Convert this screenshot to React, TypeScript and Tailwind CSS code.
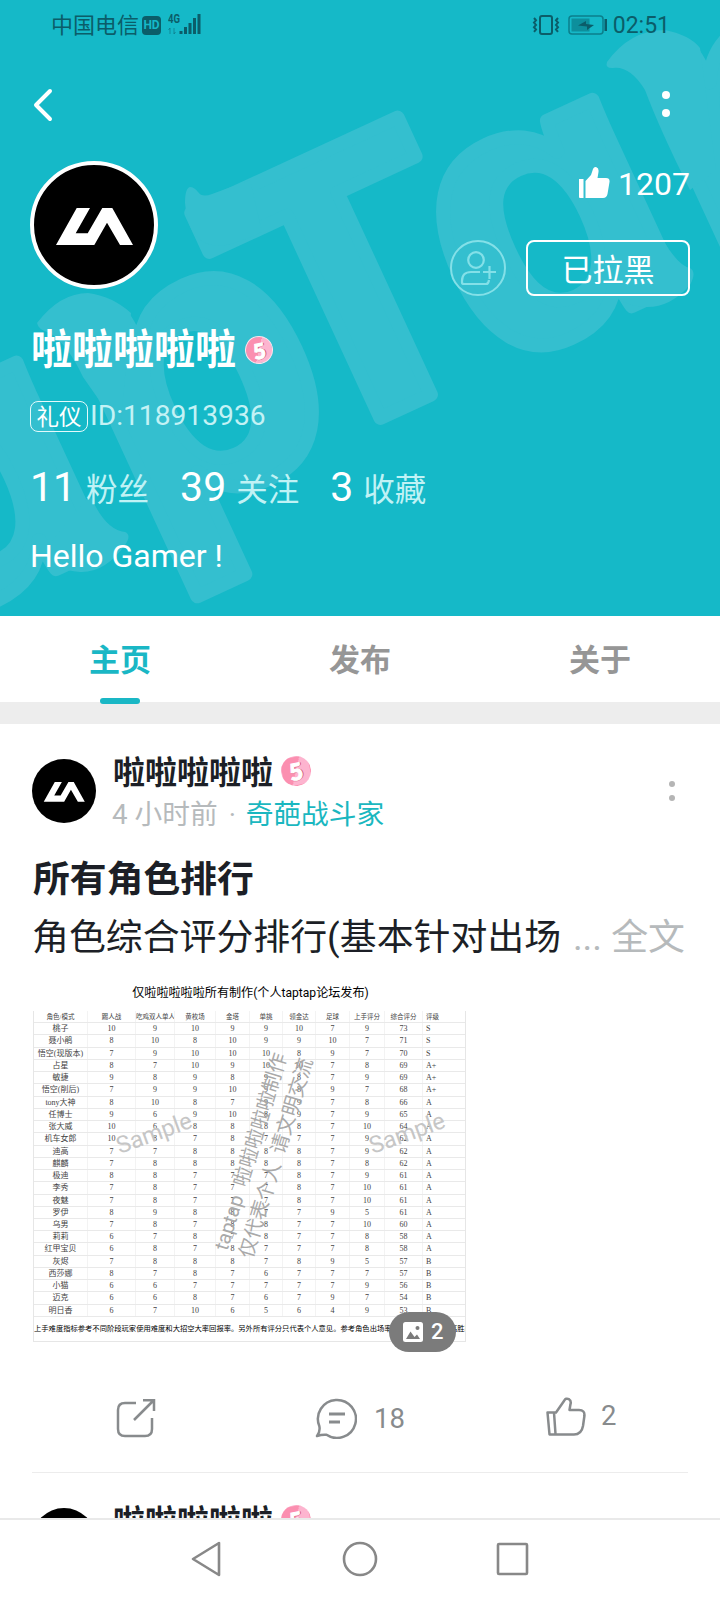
import { clsx } from 'clsx';
import type { ReactNode } from 'react';

const columns = ['角色/模式', '踢人战', '吃鸡双人单人', '黄枚场', '金塔', '单挑', '领金达', '足球', '上手评分', '综合评分', '评级'];

const ranking = [
  ['桃子', 10, 9, 10, 9, 9, 10, 7, 9, 73, 'S'],
  ['聂小鹃', 8, 10, 8, 10, 9, 9, 10, 7, 71, 'S'],
  ['悟空(现版本)', 7, 9, 10, 10, 10, 8, 9, 7, 70, 'S'],
  ['占星', 8, 7, 10, 9, 10, 10, 7, 8, 69, 'A+'],
  ['敏捷', 9, 8, 9, 8, 9, 8, 7, 9, 69, 'A+'],
  ['悟空(削后)', 7, 9, 9, 10, 9, 8, 9, 7, 68, 'A+'],
  ['tony大神', 8, 10, 8, 7, 9, 9, 7, 8, 66, 'A'],
  ['任博士', 9, 6, 9, 10, 8, 9, 7, 9, 65, 'A'],
  ['张大威', 10, 6, 8, 8, 8, 8, 7, 10, 64, 'A'],
  ['机车女郎', 10, 8, 7, 8, 7, 7, 7, 9, 62, 'A'],
  ['迪高', 7, 7, 8, 8, 8, 8, 7, 9, 62, 'A'],
  ['麒麟', 7, 8, 8, 8, 8, 8, 7, 8, 62, 'A'],
  ['极迪', 8, 8, 7, 7, 7, 8, 7, 9, 61, 'A'],
  ['李秀', 7, 8, 7, 7, 7, 8, 7, 10, 61, 'A'],
  ['夜魅', 7, 8, 7, 7, 7, 8, 7, 10, 61, 'A'],
  ['罗伊', 8, 9, 8, 8, 7, 7, 9, 5, 61, 'A'],
  ['乌男', 7, 8, 7, 8, 8, 7, 7, 10, 60, 'A'],
  ['莉莉', 6, 7, 8, 7, 8, 7, 7, 8, 58, 'A'],
  ['红甲宝贝', 6, 8, 7, 8, 7, 7, 7, 8, 58, 'A'],
  ['灰烬', 7, 8, 8, 8, 7, 8, 9, 5, 57, 'B'],
  ['西莎娜', 8, 7, 8, 7, 6, 7, 7, 7, 57, 'B'],
  ['小猫', 6, 6, 7, 7, 7, 7, 7, 9, 56, 'B'],
  ['迈克', 6, 6, 8, 7, 6, 7, 9, 7, 54, 'B'],
  ['明日香', 6, 7, 10, 6, 5, 6, 4, 9, 53, 'B'],
];

function Avatar({ className }: { className: string }) {
  return (
    <div className={clsx('shrink-0 overflow-hidden rounded-full bg-black', className)}>
      <svg viewBox="0 0 120 120" className="h-full w-full">
        <path
          fill="#fff"
          d="M22 80 42.700 43H56L41.700 68.300h12L68.300 43h10L99 80H86L73 57.700 60.300 80Z"
        />
      </svg>
    </div>
  );
}

function LevelBadge({ className }: { className: string }) {
  return (
    <div
      className={clsx(
        'flex shrink-0 -rotate-12 items-center justify-center rounded-full border bg-[linear-gradient(115deg,#fb8fb0_50%,#fdb4cf_50%)] leading-none font-black text-white [-webkit-text-stroke:1px_#fff] [font-family:Lato,sans-serif] [text-shadow:1.500px_0_0_#d9587a,0_1px_0_#e0708f]',
        className,
      )}
    >
      5
    </div>
  );
}

function Dots({ className }: { className: string }) {
  return (
    <div className={clsx('flex flex-col', className)}>
      <span className="aspect-square w-full rounded-full bg-current" />
      <span className="aspect-square w-full rounded-full bg-current" />
    </div>
  );
}

function StatusBar() {
  return (
    <div className="flex h-[50px] items-center pr-[50px] pl-[51px] text-[#0b5d69]">
      <span className="mt-[2px] text-[22px] leading-none">中国电信</span>
      <span className="ml-[3px] flex h-[19px] w-[19px] items-center justify-center rounded-[4px] bg-[#0b5d69] text-[12px] leading-none font-bold text-[#15b9c8]">
        HD
      </span>
      <svg viewBox="0 0 34 22" className="mb-[2px] ml-[7px] h-[22px] w-[34px]" fill="currentColor">
        <text x="0" y="10" fontSize="12" fontWeight="700" textLength="12" lengthAdjust="spacingAndGlyphs">
          4G
        </text>
        <path d="M2 21v-6l-1.500 2M6 15v6l1.500-2" fill="none" stroke="currentColor" opacity=".5" />
        <rect x="11.500" y="18" width="3" height="3" />
        <rect x="16" y="14" width="3" height="7" />
        <rect x="20.500" y="10" width="3" height="11" />
        <rect x="25" y="5" width="3" height="16" />
        <rect x="29.500" y="1" width="3" height="20" />
      </svg>
      <svg viewBox="0 0 28 22" className="ml-auto h-[22px] w-[28px]" fill="none" stroke="currentColor" strokeWidth="2">
        <rect x="8" y="2" width="12" height="18" rx="2" />
        <path d="M2 4l2 2.300-2 2.300 2 2.300-2 2.300 2 2.300-2 2.300M26 4l-2 2.300 2 2.300-2 2.300 2 2.300-2 2.300 2 2.300" />
      </svg>
      <svg viewBox="0 0 40 20" className="ml-[8px] h-[20px] w-[40px]" fill="none">
        <rect x="1" y="1" width="34" height="18" rx="3" stroke="#0b7f8c" strokeWidth="1.500" />
        <rect x="3.500" y="3.500" width="18" height="13" fill="#0d8f9c" />
        <path d="M10 10.500 18 6v3l8 1-7 5v-3.500Z" fill="currentColor" />
        <rect x="36.500" y="4" width="2.500" height="12" fill="currentColor" />
      </svg>
      <span className="ml-[5px] text-[23px] leading-none">02:51</span>
    </div>
  );
}

function Wordmark() {
  return (
    <svg
      viewBox="0 0 720 616"
      className="absolute inset-0 h-full w-full"
      fill="#34bfcf"
      stroke="#34bfcf"
      strokeWidth="14"
      strokeLinejoin="round"
      fontFamily="Liberation Sans"
      fontWeight="700"
      fontSize="386"
      aria-hidden="true"
    >
      <g transform="rotate(-24.800)">
        <text x="-347" y="540">ɑ</text>
        <text x="-98" y="544">p</text>
        <text x="80" y="539">T</text>
        <text x="286" y="543">ɑ</text>
        <text x="530" y="543">p</text>
      </g>
      {/* brush flares at the ends of the strokes */}
      <g stroke="none">
        <path d="M190 187Q185 188 185 203Q188 246 220 246Q236 244 262 232L250 180 212 194Q202 198 198 192Q194 187 190 187Z" />
        <path d="M37 323Q60 293 88 293Q112 296 131 313L120 430 83 377Q68 345 50 333Q38 330 37 323Z" />
        <path d="M607 62Q630 30 665 30Q690 35 700 48L716 170 690 190Q660 130 645 90Q630 65 612 68Q605 68 607 62Z" />
        <path d="M655 225Q675 265 690 268Q697 272 690 285Q670 308 645 307Q620 305 608 290Z" />
        <path d="M90 495Q105 530 125 532Q132 535 125 545Q105 573 80 572Q55 570 40 555Z" />
      </g>
    </svg>
  );
}

function Stat({ value, label }: { value: number; label: string }) {
  return (
    <div className="flex items-baseline gap-[10px]">
      <span className="text-[41px] leading-none">{value}</span>
      <span className="text-[31.500px] leading-none text-[#c0f2f5]">{label}</span>
    </div>
  );
}

function Profile() {
  return (
    <header className="relative h-[616px] overflow-hidden bg-[#15b9c8] text-white">
      <Wordmark />
      <div className="relative">
        <StatusBar />
        <div className="flex h-[111px] items-start justify-between pt-[38px] pr-[50px] pl-[33px]">
          <svg viewBox="0 0 20 34" className="h-[34px] w-[20px]" fill="none" stroke="currentColor" strokeWidth="4" strokeLinecap="round" strokeLinejoin="round">
            <path d="M17 3 3 17l14 14" />
          </svg>
          <Dots className="mt-[3px] w-[8px] gap-[10px]" />
        </div>
        <div className="flex justify-between pr-[30px] pl-[30px]">
          <Avatar className="h-[128px] w-[128px] border-4 border-white" />
          <div className="flex flex-col items-end">
            <div className="flex h-[46px] items-center gap-[8px] text-[32px] leading-none">
              <svg viewBox="0 0 31 32" className="mb-[3px] h-[32px] w-[31px]" fill="currentColor">
                <path d="M0 12h4.500v19H1Q0 31 0 30ZM6.500 31V14L12 8l2-6q1-2.500 3.500-1.800Q20 1 19.500 5l-1 6H27q4 0 3.500 4l-2 12q-.8 4-4.500 4Z" />
              </svg>
              1207
            </div>
            <div className="mt-[33px] flex gap-[20px]">
              <div className="flex h-[56px] w-[56px] items-center justify-center rounded-full border-2 border-[#83e0e8]">
                <svg viewBox="0 0 36 36" className="h-[36px] w-[36px]" fill="none" stroke="#83e0e8" strokeWidth="2.200">
                  <circle cx="16" cy="10" r="7.800" />
                  <path d="M20 22H11Q2 22 2 31v1.500Q2 34 4 34h22q2.500 0 3-4M29.500 16v13M23 22h13" />
                </svg>
              </div>
              <div className="flex h-[56px] w-[164px] items-center justify-center rounded-lg border-2 border-white pt-[4px] text-[31px] leading-none">
                已拉黑
              </div>
            </div>
          </div>
        </div>
        <div className="mt-[32px] flex h-[44px] items-center pl-[31px]">
          <h1 className="text-[41px] leading-none font-bold">啦啦啦啦啦</h1>
          <LevelBadge className="ml-[9px] h-[28px] w-[28px] border-[#ffe3ec] text-[21px]" />
        </div>
        <div className="mt-[29px] flex h-[31px] items-center gap-[2px] pl-[30px]">
          <span className="flex h-[31px] w-[58px] items-center justify-center rounded-lg border border-[#e3fafb] pt-px text-[22.500px] leading-none">
            礼仪
          </span>
          <span className="text-[28.200px] leading-none text-[#c3f2f5]">ID:118913936</span>
        </div>
        <div className="mt-[33px] flex h-[44px] items-center gap-[31px] pl-[30px]">
          <Stat value={11} label="粉丝" />
          <Stat value={39} label="关注" />
          <Stat value={3} label="收藏" />
        </div>
        <p className="mt-[29px] pl-[30px] text-[32px] leading-[36px]">Hello Gamer !</p>
      </div>
    </header>
  );
}

function Tabs() {
  return (
    <nav className="flex h-[108px] shrink-0 border-b-22 border-[#ededed] text-[31px] font-bold text-[#969696]">
      {['主页', '发布', '关于'].map((tab, i) => (
        <div key={tab} className={clsx('flex flex-1 flex-col items-center', i === 0 && 'text-[#1ab7c5]')}>
          <span className="mt-[23px] h-[59px] shrink-0 leading-[44px]">{tab}</span>
          {i === 0 && <span className="relative h-[6px] w-[40px] shrink-0 rounded-full bg-[#1ab7c5]" />}
        </div>
      ))}
    </nav>
  );
}

function PostHeader() {
  return (
    <div className="flex">
      <Avatar className="h-[64px] w-[64px]" />
      <div className="ml-[17px]">
        <div className="-mt-[4px] flex h-[32px] items-center">
          <span className="pt-[4px] text-[32px] leading-none font-bold text-[#1c1f26]">啦啦啦啦啦</span>
          <LevelBadge className="ml-[8px] h-[30px] w-[30px] border-transparent text-[23px]" />
        </div>
        <div className="mt-[12px] flex h-[32px] items-center text-[27.700px] leading-none text-[#b6babc]">
          <span className="-ml-px">4</span>
          <span className="ml-[7px]">小时前</span>
          <span className="mx-[11px] w-[6px]">·</span>
          <span className="text-[#1ab7c0]">奇葩战斗家</span>
        </div>
      </div>
      <Dots className="mt-[22px] mr-[13px] ml-auto w-[6px] gap-[8px] text-[#b5b5b5]" />
    </div>
  );
}

function Cell({ children, last }: { children: ReactNode; last: boolean }) {
  return (
    <span className={clsx('overflow-hidden whitespace-nowrap', last ? 'pl-[3px]' : 'border-r border-[#f3f3f3] text-center')}>
      {children}
    </span>
  );
}

function RankingPicture() {
  return (
    <div className="relative w-[434px]">
      <p className="h-[26px] pl-[3px] text-center text-[12.100px] leading-[26px] text-black">
        仅啦啦啦啦啦所有制作(个人taptap论坛发布)
      </p>
      <div className="mt-[5px] ml-[1px] h-[331px] w-[433px] overflow-hidden border border-t-0 border-[#e6e6e6] text-[8px] text-[#444] [font-family:'Liberation_Serif','Noto_Sans_CJK_SC',serif]">
        {[columns, ...ranking].map((row, r) => (
          <div
            key={r}
            className="grid h-[12.240px] grid-cols-[54px_48px_39px_41px_34px_33px_33px_34px_35px_38px_43px] border-b border-[#e9e9e9] leading-[12px]"
          >
            {row.map((value, c) => (
              <Cell key={c} last={c === row.length - 1}>
                <span className={clsx(r === 0 && 'text-[6.500px]')}>{value}</span>
              </Cell>
            ))}
          </div>
        ))}
        <p className="mt-[6px] text-[7.300px] leading-[12px] whitespace-nowrap text-black">
          上手难度指标参考不同阶段玩家使用难度和大招空大率回报率。另外所有评分只代表个人意见。参考角色出场率和大多数不同对局高胜率评价
        </p>
      </div>

      {/* stamps over the table */}
      <div className="absolute top-[142px] left-[83px] -rotate-[20deg] text-[23.500px] leading-none text-[#c6c6c6]">Sample</div>
      <div className="absolute top-[142px] left-[336px] -rotate-[20deg] text-[23.500px] leading-none text-[#c6c6c6]">Sample</div>
      <div className="absolute top-[266px] left-[177px] origin-top-left -rotate-[73deg] text-[19.800px] leading-[26px] whitespace-pre text-[#a9a9a9]">
        taptap  啦啦啦啦啦制作{'\n'}仅代表个人  请文明交流
      </div>

      <div className="absolute right-[10px] bottom-[-10px] flex h-[40px] w-[67px] items-center rounded-full bg-[#7b7b7b] pl-[14px] text-[22px] leading-none font-medium text-white">
        <svg viewBox="0 0 20 20" className="mr-[8px] h-[20px] w-[20px]">
          <rect width="20" height="20" rx="2.500" fill="#fff" />
          <path d="M3 17 7.500 9.500 11.500 15 14 12.500 17 17Z" fill="#7b7b7b" />
          <circle cx="14.500" cy="6" r="2" fill="#7b7b7b" />
        </svg>
        2
      </div>
    </div>
  );
}

function Actions() {
  return (
    <div className="flex h-[42px] items-start pl-[84px] text-[27.500px] leading-none text-[#888b8d]">
      <svg viewBox="0 0 40 40" className="h-[40px] w-[40px]" fill="none" stroke="currentColor" strokeWidth="2.500">
        <path d="M20 5H9Q2 5 2 12v19q0 7 7 7h20q7 0 7-7V20" />
        <path d="M18 22 37 3M27 2.200h11V13" />
      </svg>
      <svg viewBox="0 0 42 42" className="-mt-px ml-[159px] h-[42px] w-[42px]" fill="none" stroke="currentColor" strokeWidth="2.500" strokeLinejoin="round">
        <path d="M4.300 29A19 19 0 1 1 11.500 37.800Q6.500 37.500 2 39 5.500 34.500 4.300 29Z" />
        <path d="M14 17h16M14 25h11" strokeWidth="3" />
      </svg>
      <span className="mt-[7px] ml-[17px]">18</span>
      <svg viewBox="0 0 40 40" className="-mt-px ml-[141px] h-[40px] w-[40px]" fill="none" stroke="currentColor" strokeWidth="2.500" strokeLinejoin="round">
        <path d="M1.500 15.500H10L18 4q1.700-3.500 5-1.800 2.600 1.800 1.400 5.300L23.500 13H33q6 0 5.400 6L37 29q-1.500 8.500-9 8.500H3.500ZM8 15.500 9.500 37" />
      </svg>
      <span className="mt-[4px] ml-[15px]">2</span>
    </div>
  );
}

function Feed() {
  return (
    <main className="h-[794px] shrink-0 overflow-hidden bg-white px-[32px]">
      <div className="pt-[35px]">
        <PostHeader />
      </div>
      <h2 className="mt-[27px] h-[44px] pl-px text-[36.800px] leading-[44px] font-bold text-[#1c1f26]">所有角色排行</h2>
      <p className="mt-[14px] flex h-[44px] text-[36.900px] leading-[44px] whitespace-nowrap text-[#1c1f26]">
        角色综合评分排行(基本针对出场
        <span className="ml-auto pr-[3px] text-[#b6babc]">... 全文</span>
      </p>
      <div className="mt-[20px]">
        <RankingPicture />
      </div>
      <div className="mt-[56px]">
        <Actions />
      </div>
      <hr className="mt-[32px] mb-[35px] border-[#ececec]" />
      <PostHeader />
    </main>
  );
}

function SystemNav() {
  return (
    <footer className="flex h-[82px] shrink-0 items-center border-t-2 border-[#e9e9e9] bg-white px-[189px] pb-[2px]">
      <svg viewBox="0 0 342 40" className="h-[40px] w-full" fill="none" stroke="#888" strokeWidth="2.600" strokeLinejoin="round">
        <path d="M4 20 30 4v32Z" />
        <circle cx="171" cy="20" r="16" />
        <rect x="309" y="5" width="29" height="30" rx="1" />
      </svg>
    </footer>
  );
}

export default function App() {
  return (
    <div className="flex h-[1600px] w-[720px] flex-col overflow-hidden bg-white [font-family:Roboto,'Noto_Sans_CJK_SC',sans-serif]">
      <Profile />
      <Tabs />
      <Feed />
      <SystemNav />
    </div>
  );
}
